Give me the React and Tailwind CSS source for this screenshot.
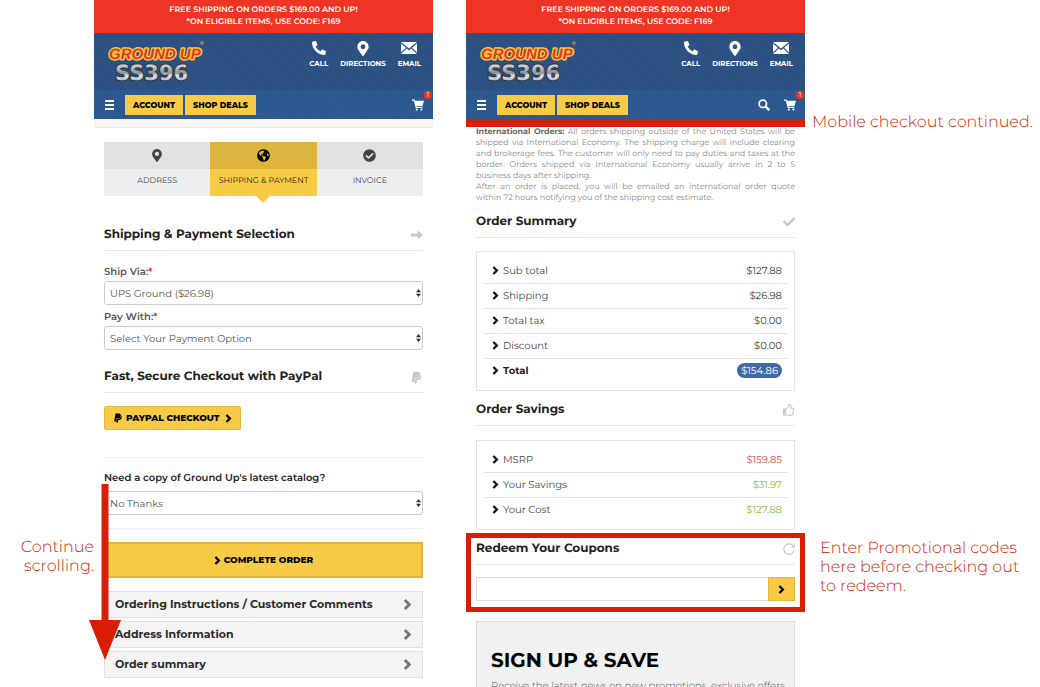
import { FaCheck, FaCheckCircle, FaGlobeAmericas, FaMapMarkerAlt, FaPaypal, FaPhoneAlt, FaRegThumbsUp } from "react-icons/fa";

const Chevron = ({ className = "" }) => (
  <svg viewBox="0 0 8 10" className={className} fill="none" stroke="currentColor" strokeWidth="2.6" aria-hidden="true">
    <path d="M1.6 1 5.6 5 1.6 9" />
  </svg>
);

const Envelope = () => (
  <svg viewBox="0 0 16 12" className="h-3 w-4" fill="currentColor" aria-hidden="true">
    <path d="M0 0h16L8 6.6zM0 1.4 4.9 5.7 0 10.6zM16 1.4 11.1 5.7 16 10.6zM0 12l5.8-5.5L8 8.3l2.2-1.8L16 12z" />
  </svg>
);

const Cart = () => (
  <svg viewBox="0 0 12 12" className="h-3 w-3" fill="currentColor" aria-hidden="true">
    <path d="M0 .4h2.6l.4 1.4h9L10.4 7.2H4.4l.2.7h5.8v1.2H3.7L1.7 1.7H0z" />
    <circle cx="4.8" cy="10.6" r="1.1" />
    <circle cx="9.4" cy="10.6" r="1.1" />
  </svg>
);

const Search = () => (
  <svg viewBox="0 0 12 12" className="h-3 w-3" fill="none" stroke="currentColor" aria-hidden="true">
    <circle cx="4.8" cy="4.8" r="3.7" strokeWidth="1.7" />
    <path d="m7.6 7.6 3.6 3.6" strokeWidth="2.3" />
  </svg>
);

const ArrowRight = () => (
  <svg viewBox="0 0 12 10" className="h-[10px] w-3" fill="currentColor" aria-hidden="true">
    <path d="M0 3.4h6.8V.4L12 5 6.8 9.6v-3H0z" />
  </svg>
);

const Refresh = () => (
  <svg viewBox="0 0 12 12" className="h-3 w-3" fill="none" stroke="currentColor" aria-hidden="true">
    <path d="M10.4 3.2A5.2 5.2 0 1 0 11.2 7" strokeWidth="1.2" />
    <path d="M11.4.6v3.4H8" strokeWidth="1.2" />
  </svg>
);

const Logo = () => (
  <svg viewBox="0 0 100 46" className="h-[46px] w-[100px]" role="img" aria-label="Ground Up SS396">
    <defs>
      <linearGradient id="chrome" x1="0" y1="0" x2="0" y2="1">
        <stop offset="0" stopColor="#f2f2f2" />
        <stop offset="0.5" stopColor="#8d9197" />
        <stop offset="0.6" stopColor="#e2e2e2" />
        <stop offset="1" stopColor="#9a9a9a" />
      </linearGradient>
    </defs>
    <text x="3" y="22" fontFamily="'Liberation Sans', sans-serif" fontSize="15" fontWeight="700" fontStyle="italic" fill="#e7352b" stroke="#f6c83c" strokeWidth="3" strokeLinejoin="round" paintOrder="stroke">
      GROUND UP
    </text>
    <text x="9" y="43" fontFamily="'DejaVu Sans', sans-serif" fontSize="21" fontWeight="700" fill="url(#chrome)" stroke="#30363f" strokeWidth="2" paintOrder="stroke">
      SS396
    </text>
    <circle cx="96" cy="6" r="1.3" fill="none" stroke="#f0a33c" strokeWidth="0.8" />
  </svg>
);

const contacts = [
  { label: "CALL", icon: <FaPhoneAlt className="h-[14px] w-[14px]" /> },
  { label: "DIRECTIONS", icon: <FaMapMarkerAlt className="h-[15px] w-3" /> },
  { label: "EMAIL", icon: <Envelope /> },
];

const SiteHeader = ({ withSearch = false }) => (
  <header className="text-white">
    <p className="h-[33px] bg-[#ee3424] pt-1 text-center text-[8px] leading-[12px] font-semibold">
      FREE SHIPPING ON ORDERS $169.00 AND UP!
      <br />
      *ON ELIGIBLE ITEMS, USE CODE: F169
    </p>
    <div className="flex h-[57px] items-start justify-between bg-[#2b5080] bg-[repeating-linear-gradient(45deg,#2d5485_0_1px,transparent_1px_2px)] px-3 pt-1">
      <a href="#home">
        <Logo />
      </a>
      <nav className="flex gap-3 pt-1">
        {contacts.map((item) => (
          <a key={item.label} href={`#${item.label.toLowerCase()}`} className="flex flex-col items-center text-[7px] leading-[10px] font-bold">
            <span className="mb-1 flex h-[14px] items-center">{item.icon}</span>
            {item.label}
          </a>
        ))}
      </nav>
    </div>
    <div className="flex h-[29px] items-center bg-[#2f5b93] bg-[repeating-linear-gradient(45deg,#2d578c_0_1px,transparent_1px_2px)] pr-[9px] pl-[11px]">
      <button aria-label="Menu" className="mr-[11px] flex w-[9px] flex-col gap-[2px]">
        <span className="h-[2px] bg-white" />
        <span className="h-[2px] bg-white" />
        <span className="h-[2px] bg-white" />
      </button>
      <button className="mr-[2px] h-5 bg-[#f8cb46] px-2 text-[8px] font-extrabold text-black">ACCOUNT</button>
      <button className="h-5 bg-[#f8cb46] px-2 text-[8px] font-extrabold text-black">SHOP DEALS</button>
      <div className="ml-auto flex gap-[14px]">
        {withSearch && (
          <button aria-label="Search">
            <Search />
          </button>
        )}
        <button aria-label="Cart" className="relative">
          <Cart />
          <span className="absolute -top-2 -right-2 h-2 w-2 rounded-full bg-[#ee3424] text-[7px] leading-[8px]">1</span>
        </button>
      </div>
    </div>
  </header>
);

const steps = [
  { label: "ADDRESS", icon: <FaMapMarkerAlt className="h-[13px] w-[10px]" /> },
  { label: "SHIPPING & PAYMENT", icon: <FaGlobeAmericas className="h-[13px] w-[13px]" />, active: true },
  { label: "INVOICE", icon: <FaCheckCircle className="h-[13px] w-[13px]" /> },
];

const Steps = () => (
  <ol className="mt-[14px] grid grid-cols-3 text-center text-[8px]">
    {steps.map((step) => (
      <li key={step.label} className={step.active ? "relative bg-[#f8cb46] text-[#222]" : "bg-[#edeef0] text-[#444]"}>
        <div className={`flex h-[27px] items-center justify-center ${step.active ? "bg-[#ddb53e] text-black" : "bg-[#e1e2e4]"}`}>{step.icon}</div>
        <p className="h-[27px] leading-6">{step.label}</p>
        {step.active && (
          <span className="absolute top-full left-1/2 -translate-x-1/2 border-x-[7px] border-t-[7px] border-x-transparent border-t-[#f8cb46]" />
        )}
      </li>
    ))}
  </ol>
);

const SectionHeading = ({ children, icon, className = "" }) => (
  <div className={`flex items-center justify-between border-b border-[#e8e8e8] pb-1 ${className}`}>
    <h2 className="text-[12px] leading-[22px] font-bold text-[#222]">{children}</h2>
    <span className="text-[#c8c8c8]">{icon}</span>
  </div>
);

const SelectBox = ({ id, value }) => (
  <div className="relative">
    <select id={id} className="block h-6 w-full appearance-none rounded-[3px] border border-[#ccc] bg-white px-[5px] text-[10px] text-[#555]">
      <option>{value}</option>
    </select>
    <svg viewBox="0 0 5 8" className="pointer-events-none absolute top-2 right-[2px] h-2 w-[5px]" fill="#333" aria-hidden="true">
      <path d="M0 3.3 2.5 0 5 3.3zM0 4.7h5L2.5 8z" />
    </svg>
  </div>
);

const AmountTable = ({ rows, className = "" }) => (
  <div className={`border border-[#e4e4e4] px-[7px] pt-[6px] pb-[7px] ${className}`}>
    <table className="w-full border-collapse text-[10px] text-[#444]">
      <tbody>
        {rows.map((row) => (
          <tr key={row.label} className="h-[25px] border-b border-[#e2e2e2] last:border-b-0">
            <th scope="row" className={`pl-2 text-left ${row.total ? "font-bold text-[#222]" : "font-normal"}`}>
              <span className="flex items-center gap-1">
                <Chevron className="h-[9px] w-[7px] text-[#111]" />
                {row.label}
              </span>
            </th>
            <td className={`pr-[5px] text-right ${row.color || ""}`}>
              {row.total ? <span className="rounded-full bg-[#4069a8] px-1 py-px text-white">{row.amount}</span> : row.amount}
            </td>
          </tr>
        ))}
      </tbody>
    </table>
  </div>
);

const summary = [
  { label: "Sub total", amount: "$127.88" },
  { label: "Shipping", amount: "$26.98" },
  { label: "Total tax", amount: "$0.00" },
  { label: "Discount", amount: "$0.00" },
  { label: "Total", amount: "$154.86", total: true },
];

const savings = [
  { label: "MSRP", amount: "$159.85", color: "text-[#d9534f]" },
  { label: "Your Savings", amount: "$31.97", color: "text-[#8cc152]" },
  { label: "Your Cost", amount: "$127.88", color: "text-[#8cc152]" },
];

const panels = ["Ordering Instructions / Customer Comments", "Address Information", "Order summary"];

const PaymentScreen = () => (
  <main className="relative">
    <SiteHeader />
    <div className="h-[9px] border-b border-[#e8e8e8] bg-[#f6f6f6]" />
    <div className="px-[10px]">
      <Steps />
      <SectionHeading icon={<ArrowRight />} className="mt-7">
        Shipping &amp; Payment Selection
      </SectionHeading>
      <label htmlFor="ship" className="mt-[14px] mb-[3px] block text-[10px] leading-[13px] font-semibold text-[#555]">
        Ship Via:<span className="text-[#f00]">*</span>
      </label>
      <SelectBox id="ship" value="UPS Ground ($26.98)" />
      <label htmlFor="pay" className="mt-[5px] mb-[3px] block text-[10px] leading-[13px] font-semibold text-[#555]">
        Pay With:<span className="text-[#f00]">*</span>
      </label>
      <SelectBox id="pay" value="Select Your Payment Option" />
      <SectionHeading icon={<FaPaypal className="h-[13px] w-[13px]" />} className="mt-4">
        Fast, Secure Checkout with PayPal
      </SectionHeading>
      <button className="mt-[13px] flex h-6 items-center gap-[3px] rounded-[2px] border border-[#e2b93f] bg-[#f8cb46] px-2 text-[9px] font-extrabold text-black">
        <FaPaypal className="h-[10px] w-[10px]" />
        PAYPAL CHECKOUT
        <Chevron className="ml-[2px] h-[9px] w-[7px]" />
      </button>
      <hr className="mt-[27px] border-[#eee]" />
      <label htmlFor="catalog" className="mt-[13px] mb-[7px] block text-[10px] leading-[13px] font-semibold text-[#222]">
        Need a copy of Ground Up's latest catalog?
      </label>
      <SelectBox id="catalog" value="No Thanks" />
      <hr className="mt-[13px] border-[#eee]" />
      <button className="mt-[13px] flex h-9 w-full items-center justify-center gap-[3px] border-2 border-[#e0b63a] bg-[#f8cb46] text-[9px] font-extrabold text-black">
        <Chevron className="h-[9px] w-[7px]" />
        COMPLETE ORDER
      </button>
      <div className="mt-[13px] flex flex-col gap-[3px]">
        {panels.map((title) => (
          <button key={title} className="flex h-[27px] items-center justify-between border border-[#e2e2e2] bg-[#f4f4f4] px-[10px] text-[11px] font-bold text-[#2b2b2b]">
            {title}
            <Chevron className="h-[11px] w-[9px] text-[#777]" />
          </button>
        ))}
      </div>
    </div>
    <svg viewBox="0 0 32 176" className="pointer-events-none absolute top-[484px] -left-[5px] h-[176px] w-8" fill="#d81e05" aria-hidden="true">
      <path d="M12.500 0h7v136H32L16 176 0 136h12.500z" />
    </svg>
  </main>
);

const SummaryScreen = () => (
  <section>
    <SiteHeader withSearch />
    <div className="h-2 bg-[#d81e05]" />
    <div className="px-[10px]">
      <div className="text-justify text-[8px] leading-[11px] text-[#888]">
        <p>
          <b className="text-[#666]">International Orders:</b> All orders shipping outside of the United States will be shipped via International Economy. The shipping charge will include clearing and brokerage fees. The customer will only need to pay duties and taxes at the border. Orders shipped via International Economy usually arrive in 2 to 5 business days after shipping.
        </p>
        <p>After an order is placed, you will be emailed an international order quote within&nbsp;72&nbsp;hours notifying you of the shipping cost estimate.</p>
      </div>
      <SectionHeading icon={<FaCheck className="h-3 w-3" />} className="mt-[7px]">
        Order Summary
      </SectionHeading>
      <AmountTable rows={summary} className="mt-[13px]" />
      <SectionHeading icon={<FaRegThumbsUp className="h-3 w-3" />} className="mt-2">
        Order Savings
      </SectionHeading>
      <AmountTable rows={savings} className="mt-[14px]" />
    </div>
    <form className="mt-[3px] border-[5px] border-[#d81e05] px-[5px] pb-[6px]">
      <SectionHeading icon={<Refresh />}>
        <label htmlFor="coupon">Redeem Your Coupons</label>
      </SectionHeading>
      <div className="mt-3 flex h-6">
        <input id="coupon" className="min-w-0 flex-1 border border-r-0 border-[#ddd] px-2 text-[10px]" />
        <button type="button" aria-label="Apply coupon" className="flex w-[27px] items-center justify-center border border-[#e2b93f] bg-[#f8cb46] text-black">
          <Chevron className="h-[9px] w-[7px]" />
        </button>
      </div>
    </form>
    <div className="mx-[10px] mt-[9px] border border-[#ddd] bg-[#f1f1f1] pt-[27px] pb-6 pl-[14px]">
      <h2 className="text-[20px] leading-6 font-bold text-black">SIGN UP &amp; SAVE</h2>
      <p className="mt-[6px] text-[10px] leading-[14px] font-light text-[#555]">Receive the latest news on new promotions, exclusive offers</p>
    </div>
  </section>
);

export default function App() {
  return (
    <div className="grid h-screen grid-cols-[minmax(0,94fr)_minmax(0,339fr)_minmax(0,33fr)_minmax(0,339fr)_minmax(0,235fr)] items-start overflow-hidden bg-white font-['Montserrat','Inter',sans-serif] [text-rendering:geometricPrecision]">
      <p className="pt-[538px] text-right text-[16px] leading-[19px] font-light text-[#d81e05]">
        Continue
        <br />
        scrolling.
      </p>
      <PaymentScreen />
      <div />
      <SummaryScreen />
      <aside className="text-[16px] leading-[19px] font-light text-[#d81e05]">
        <p className="pt-[113px] pl-[7px] whitespace-nowrap">Mobile checkout continued.</p>
        <p className="mt-[407px] pr-2 pl-[15px]">Enter Promotional codes here before checking out to redeem.</p>
      </aside>
    </div>
  );
}
